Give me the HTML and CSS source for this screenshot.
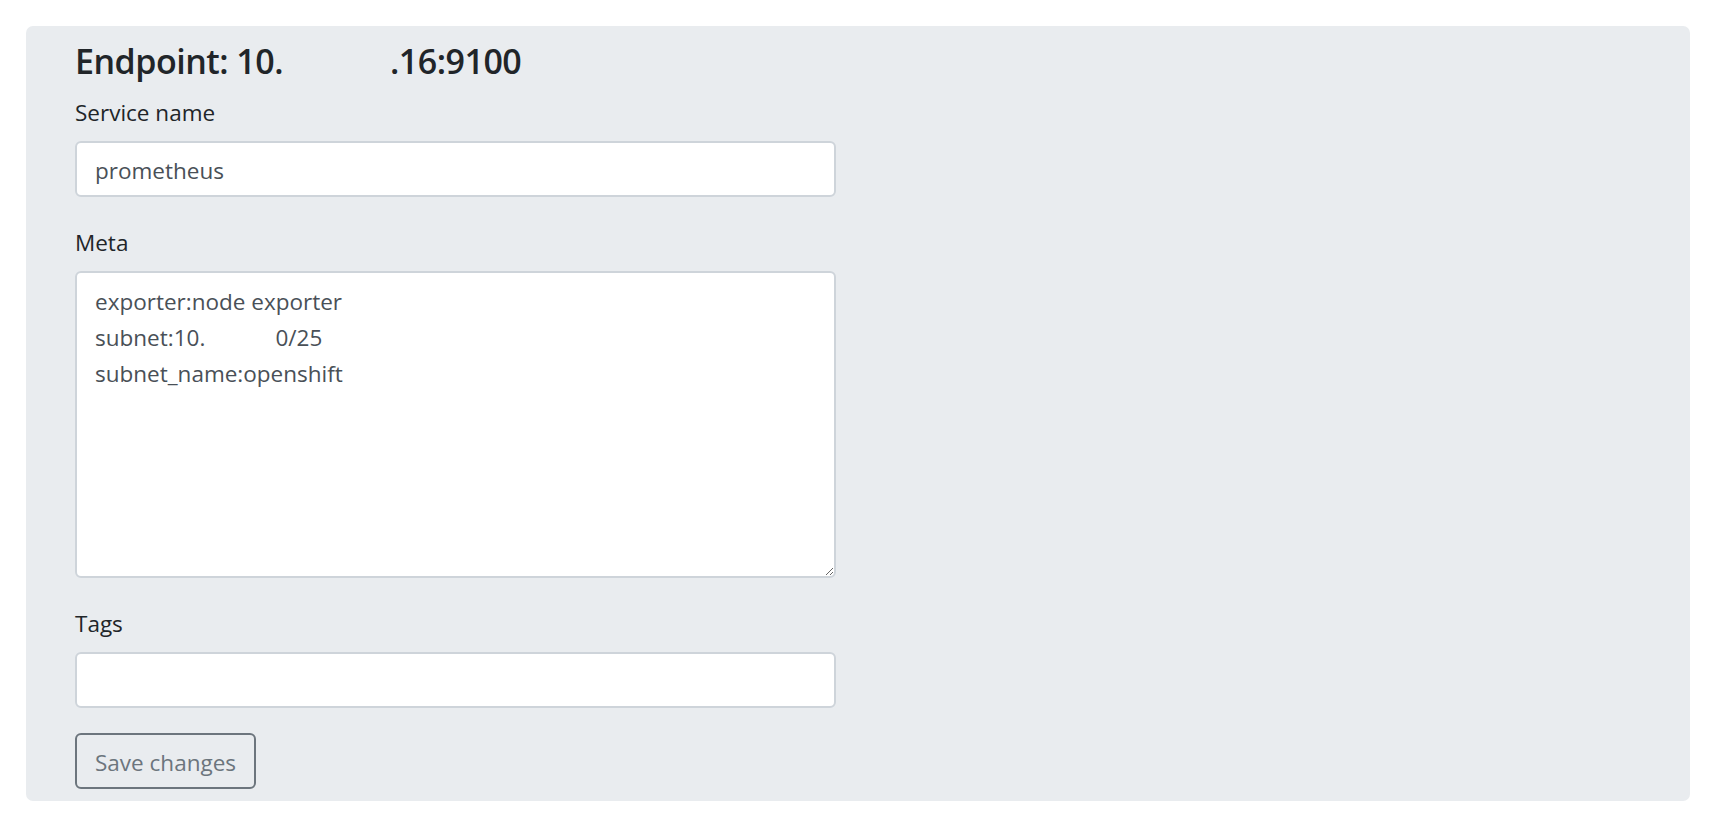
FILE: index.html
```html
<!DOCTYPE html>
<html lang="en">
<head>
<meta charset="utf-8">
<title>Endpoint</title>
<link rel="stylesheet" href="styles.css">
</head>
<body>
<div class="page">
  <section class="panel">
    <div class="panel-grid">
      <form class="endpoint-form">
        <h4 class="title">Endpoint: 10.<span class="redacted"></span>.16:9100</h4>
        <div class="form-group">
          <label class="form-label" for="svc">Service name</label>
          <input class="form-control" id="svc" type="text" value="prometheus">
        </div>
        <div class="form-group">
          <label class="form-label" for="meta">Meta</label>
          <textarea class="form-control form-textarea" id="meta">exporter:node exporter
subnet:10.            0/25
subnet_name:openshift</textarea>
        </div>
        <div class="form-group">
          <label class="form-label" for="tags">Tags</label>
          <input class="form-control" id="tags" type="text" value="">
        </div>
        <button class="btn-outline" type="button">Save changes</button>
      </form>
      <div class="empty-col"></div>
    </div>
  </section>
</div>
</body>
</html>
```

FILE: styles.css
```css
html, body {
  margin: 0;
  padding: 0;
  background: #ffffff;
}

body {
  font-family: "Open Sans", "Noto Sans", "Liberation Sans", sans-serif;
  font-size: 22.5px;
  line-height: 36px;
  color: #212529;
}

.page {
  padding: 26px 42px 0 26px;
}

.panel {
  background: #e9ecef;
  border-radius: 7px;
  padding: 12px 49px 12px 49px;
}

.panel-grid {
  display: grid;
  grid-template-columns: 1fr 1fr;
  column-gap: 45px;
}

.endpoint-form {
  display: flex;
  flex-direction: column;
  margin: 0;
}

.title {
  margin: 0 0 10px 0;
  padding-top: 2px;
  font-size: 34px;
  line-height: 43px;
  font-weight: 600;
  letter-spacing: -0.5px;
  color: #212529;
}

.redacted {
  display: inline-block;
  width: 107px;
}

.form-group {
  display: flex;
  flex-direction: column;
  margin-bottom: 26px;
}

.form-group:nth-of-type(3) {
  margin-bottom: 25px;
}

.form-label {
  display: block;
  margin-bottom: 10px;
  padding-top: 2px;
  font-size: 22.5px;
  line-height: 36px;
  color: #212529;
}

.form-control {
  box-sizing: border-box;
  display: block;
  width: 100%;
  height: 56px;
  margin: 0;
  padding: 3px 18px 0 18px;
  font-family: inherit;
  font-size: 22.5px;
  line-height: 36px;
  color: #495057;
  background: #ffffff;
  border: 2px solid #ced4da;
  border-radius: 6px;
  outline: none;
}

.form-textarea {
  height: 307px;
  padding: 11px 18px 7px 18px;
  resize: vertical;
}

.btn-outline {
  box-sizing: border-box;
  align-self: flex-start;
  height: 56px;
  padding: 3px 18px 0 18px;
  font-family: inherit;
  font-size: 22.5px;
  line-height: 36px;
  color: #6c757d;
  background: transparent;
  border: 2px solid #6c757d;
  border-radius: 6px;
}
```
